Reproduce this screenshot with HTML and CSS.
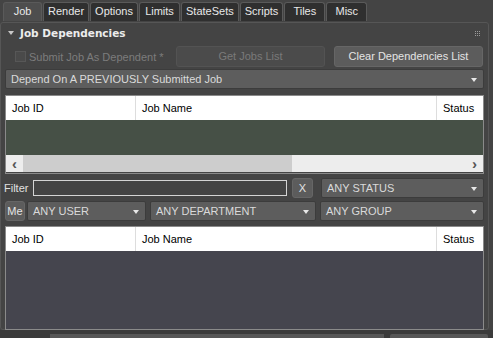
FILE: index.html
```html
<!DOCTYPE html>
<html lang="en">
<head>
    <meta charset="UTF-8">
    <title>Job Dependencies</title>
    <link rel="stylesheet" href="styles.css">
</head>
<body>
<div class="tabs">
    <div class="tab active">Job</div>
    <div class="tab">Render</div>
    <div class="tab">Options</div>
    <div class="tab">Limits</div>
    <div class="tab">StateSets</div>
    <div class="tab">Scripts</div>
    <div class="tab">Tiles</div>
    <div class="tab">Misc</div>
</div>

<div class="panel">
    <div class="rollout-head">
        <span class="caret"></span>
        <span class="title">Job Dependencies</span>
        <svg class="grip" width="5" height="5" viewBox="0 0 5 5">
            <rect x="0" y="0" width="1" height="1"/><rect x="2" y="0" width="1" height="1"/><rect x="4" y="0" width="1" height="1"/>
            <rect x="0" y="2" width="1" height="1"/><rect x="2" y="2" width="1" height="1"/><rect x="4" y="2" width="1" height="1"/>
            <rect x="0" y="4" width="1" height="1"/><rect x="2" y="4" width="1" height="1"/><rect x="4" y="4" width="1" height="1"/>
        </svg>
    </div>

    <div class="row top-row">
        <label class="check disabled"><span class="box"></span>Submit Job As Dependent *</label>
        <div class="btn disabled wide">Get Jobs List</div>
        <div class="btn wide">Clear Dependencies List</div>
    </div>

    <div class="select full">Depend On A PREVIOUSLY Submitted Job</div>

    <div class="grid first">
        <div class="grid-head">
            <div class="col id">Job ID</div>
            <div class="col name">Job Name</div>
            <div class="col status">Status</div>
        </div>
        <div class="grid-body green"></div>
        <div class="hscroll">
            <span class="arrow">&lsaquo;</span>
            <div class="track"><div class="thumb"></div></div>
            <span class="arrow">&rsaquo;</span>
        </div>
    </div>

    <div class="row filter-row">
        <span class="label">Filter</span>
        <div class="input"></div>
        <div class="btn small">X</div>
        <div class="select status-sel">ANY STATUS</div>
    </div>

    <div class="row pick-row">
        <div class="btn me">Me</div>
        <div class="select user-sel">ANY USER</div>
        <div class="select dept-sel">ANY DEPARTMENT</div>
        <div class="select group-sel">ANY GROUP</div>
    </div>

    <div class="grid second">
        <div class="grid-head">
            <div class="col id">Job ID</div>
            <div class="col name">Job Name</div>
            <div class="col status">Status</div>
        </div>
        <div class="grid-body slate"></div>
    </div>
</div>

<div class="footer">
    <div class="bar one"></div>
    <div class="bar two"></div>
</div>
</body>
</html>
```

FILE: styles.css
```css
* {
    box-sizing: border-box;
}

body {
    margin: 0;
    width: 493px;
    height: 338px;
    overflow: hidden;
    background: #444444;
    color: #dcdcdc;
    font-family: "Liberation Sans", Arial, sans-serif;
    font-size: 11px;
}

.tabs {
    display: flex;
    height: 21px;
    padding: 2px 0 0 3px;
    background: #444444;
}

.tab {
    height: 19px;
    min-width: 41px;
    line-height: 17px;
    padding: 0 4px;
    margin-right: 1px;
    text-align: center;
    background: #2f2f2f;
    border: 1px solid #5a5a5a;
    border-bottom: none;
    border-radius: 3px 3px 0 0;
    color: #e8e8e8;
    font-size: 11px;
}

.tab.active {
    background: #4e4e4e;
    min-width: 39px;
}

.panel {
    margin-top: 1px;
    height: 308px;
    border: 1px solid #565656;
    border-radius: 3px;
    padding: 2px 4px 0 4px;
    margin-right: 4px;
}

.rollout-head {
    display: flex;
    align-items: center;
    height: 16px;
}

.rollout-head .caret {
    width: 0;
    height: 0;
    margin: 0 6px 0 3px;
    border-left: 3px solid transparent;
    border-right: 3px solid transparent;
    border-top: 4px solid #c8c8c8;
}

.rollout-head .title {
    font-family: "DejaVu Sans", Verdana, sans-serif;
    font-weight: bold;
    font-size: 10.5px;
    color: #ececec;
}

.rollout-head .grip {
    margin-left: auto;
    margin-right: 4px;
    fill: #9a9a9a;
}

.row {
    display: flex;
    align-items: center;
}

.top-row {
    height: 21px;
    margin-top: 5px;
}

.check {
    display: flex;
    align-items: center;
    width: 171px;
    padding-left: 10px;
}

.check .box {
    width: 11px;
    height: 11px;
    margin-right: 3px;
    background: #4a4a4a;
    border: 1px solid #575757;
}

.check.disabled {
    color: #7c7c7c;
}

.btn {
    height: 21px;
    line-height: 19px;
    text-align: center;
    background: #5c5c5c;
    border: 1px solid #666666;
    border-radius: 3px;
    color: #e4e4e4;
}

.btn.wide {
    width: 149px;
    margin-right: 9px;
}

.btn.wide:last-child {
    margin-right: 0;
}

.btn.disabled {
    background: #4b4b4b;
    border-color: #535353;
    color: #7a7a7a;
}

.select {
    position: relative;
    height: 20px;
    line-height: 18px;
    padding-left: 5px;
    background: #5d5d5d;
    border: 1px solid #3c3c3c;
    border-radius: 2px;
    color: #dadada;
}

.select::after {
    content: "";
    position: absolute;
    right: 6px;
    top: 8px;
    border-left: 3px solid transparent;
    border-right: 3px solid transparent;
    border-top: 4px solid #e8e8e8;
}

.select.full {
    margin-top: 2px;
    width: 479px;
}

.grid {
    margin-top: 6px;
    width: 479px;
    border: 1px solid #8a8a8a;
}

.grid.first {
    height: 79px;
}

.grid.second {
    margin-top: 5px;
    height: 104px;
}

.grid-head {
    display: flex;
    height: 24px;
    background: #ffffff;
    color: #000000;
}

.grid-head .col {
    line-height: 24px;
    padding-left: 6px;
    border-right: 1px solid #dddddd;
}

.grid-head .id {
    width: 130px;
}

.grid-head .name {
    width: 301px;
}

.grid-head .status {
    flex: 1;
    border-right: none;
}

.grid-body.green {
    height: 35px;
    background: #465046;
}

.grid-body.slate {
    height: 78px;
    background: #45454e;
}

.hscroll {
    display: flex;
    align-items: center;
    height: 17px;
    background: #ededed;
    color: #555555;
}

.hscroll .arrow {
    width: 17px;
    text-align: center;
    font-size: 15px;
    font-weight: bold;
    line-height: 15px;
}

.hscroll .track {
    flex: 1;
    height: 17px;
}

.hscroll .thumb {
    width: 269px;
    height: 17px;
    background: #cdcdcd;
}

.filter-row {
    height: 19px;
    margin-top: 4px;
}

.filter-row .label {
    width: 29px;
    margin-left: -1px;
    color: #e0e0e0;
}

.filter-row .input {
    width: 254px;
    height: 16px;
    background: #444444;
    border: 1px solid #d4d4d4;
}

.btn.small {
    width: 21px;
    height: 20px;
    line-height: 18px;
    margin-left: 5px;
    margin-right: 8px;
}

.status-sel {
    width: 163px;
}

.pick-row {
    height: 20px;
    margin-top: 4px;
}

.btn.me {
    width: 20px;
    height: 20px;
    line-height: 18px;
    margin-right: 2px;
    padding: 0;
}

.user-sel {
    width: 119px;
    margin-right: 4px;
}

.dept-sel {
    width: 166px;
    margin-right: 4px;
}

.group-sel {
    width: 164px;
}

.footer {
    position: relative;
    height: 9px;
    background: #3b3b3b;
}

.footer .bar {
    position: absolute;
    top: 4px;
    height: 5px;
    background: #575757;
}

.footer .bar.one {
    left: 50px;
    width: 334px;
}

.footer .bar.two {
    left: 390px;
    width: 98px;
    border-radius: 2px 2px 0 0;
}
```
